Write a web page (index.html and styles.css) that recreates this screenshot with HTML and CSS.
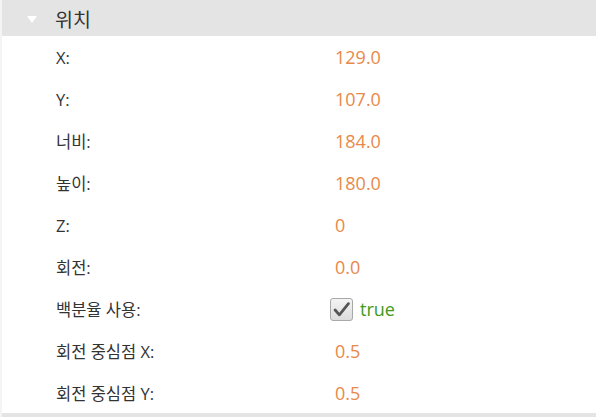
FILE: index.html
```html
<!DOCTYPE html>
<html lang="ko">
<head>
<meta charset="utf-8">
<link rel="stylesheet" href="styles.css">
</head>
<body>
<div class="panel">
  <div class="header">
    <span class="arrow"></span>
    <span class="title">위치</span>
  </div>
  <div class="rows">
    <div class="row"><span class="label">X:</span><span class="value">129.0</span></div>
    <div class="row"><span class="label">Y:</span><span class="value">107.0</span></div>
    <div class="row"><span class="label">너비:</span><span class="value">184.0</span></div>
    <div class="row"><span class="label">높이:</span><span class="value">180.0</span></div>
    <div class="row"><span class="label">Z:</span><span class="value">0</span></div>
    <div class="row"><span class="label">회전:</span><span class="value">0.0</span></div>
    <div class="row"><span class="label">백분율 사용:</span><span class="value check-cell"><span class="checkbox"><svg width="17" height="15" viewBox="0 0 16 14"><path d="M2 7.5 L6 12 L14.5 1.5" fill="none" stroke="#555" stroke-width="2.6" stroke-linecap="round" stroke-linejoin="round"/></svg></span><span class="bool">true</span></span></div>
    <div class="row"><span class="label">회전 중심점 X:</span><span class="value">0.5</span></div>
    <div class="row"><span class="label">회전 중심점 Y:</span><span class="value">0.5</span></div>
  </div>
  <div class="footer"></div>
</div>
</body>
</html>
```
FILE: styles.css
```css
html, body {
  margin: 0;
  padding: 0;
  background: #f4f4f4;
}
body {
  font-family: "Open Sans", "Noto Sans CJK KR", sans-serif;
  font-size: 16.5px;
  color: #333;
}
.panel {
  margin-left: 2px;
  width: 594px;
  height: 417px;
  background: #fff;
  display: flex;
  flex-direction: column;
}
.header {
  height: 36px;
  background: #e4e4e4;
  display: flex;
  align-items: center;
  flex-shrink: 0;
}
.arrow {
  width: 0;
  height: 0;
  margin-left: 25px;
  border-left: 5px solid transparent;
  border-right: 5px solid transparent;
  border-top: 7px solid #fff;
  margin-top: 2px;
}
.title {
  margin-left: 18px;
  font-size: 19.5px;
  color: #333;
}
.rows {
  display: flex;
  flex-direction: column;
}
.row {
  height: 42px;
  display: flex;
  align-items: center;
}
.label {
  width: 279px;
  padding-left: 54px;
  color: #333;
}
.value {
  color: #e8894a;
  font-size: 18px;
}
.check-cell {
  display: flex;
  align-items: center;
  margin-left: -5px;
}
.checkbox {
  width: 21px;
  height: 21px;
  border: 1px solid #a8a8a8;
  border-radius: 3px;
  background: linear-gradient(#f4f4f4, #dcdcdc);
  display: flex;
  align-items: center;
  justify-content: center;
}
.bool {
  margin-left: 7px;
  color: #3f9a1e;
}
.footer {
  flex: 1;
  background: #e4e4e4;
  margin-top: -1px;
}
```
